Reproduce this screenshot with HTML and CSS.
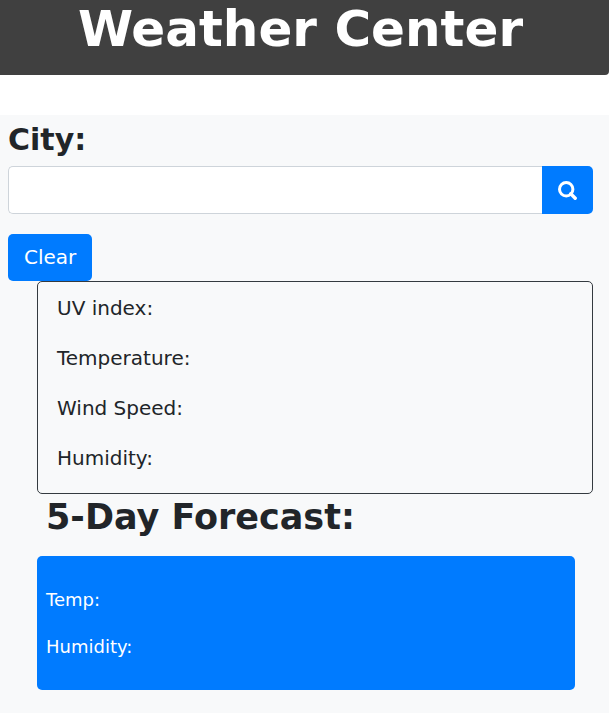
FILE: index.html
```html
<!DOCTYPE html>
<html lang="en">
<head>
  <meta charset="utf-8">
  <meta name="viewport" content="width=device-width, initial-scale=1">
  <title>Weather Center</title>
  <link rel="stylesheet" href="styles.css">
</head>
<body>
  <header class="banner">
    <h1 class="banner-title">Weather Center</h1>
  </header>
  <main class="content">
    <form class="search">
      <label class="search-label" for="city">City:</label>
      <div class="search-group">
        <input class="search-input" id="city" type="text">
        <button class="button search-button" type="submit" aria-label="Search">
          <svg class="search-icon" viewBox="0 0 19 20" aria-hidden="true">
            <circle cx="8.2" cy="9.2" r="6.7" fill="none" stroke="currentColor" stroke-width="3"/>
            <path d="M12.8 13.8L17.2 18.2" fill="none" stroke="currentColor" stroke-width="3.4" stroke-linecap="round"/>
          </svg>
        </button>
      </div>
      <button class="button" type="reset">Clear</button>
    </form>
    <section class="current">
      <p class="reading">UV index:</p>
      <p class="reading">Temperature:</p>
      <p class="reading">Wind Speed:</p>
      <p class="reading">Humidity:</p>
    </section>
    <section class="forecast">
      <h2 class="forecast-title">5-Day Forecast:</h2>
      <div class="day">
        <p class="day-reading">Temp:</p>
        <p class="day-reading">Humidity:</p>
      </div>
    </section>
  </main>
</body>
</html>
```
FILE: styles.css
```css
* {
  box-sizing: border-box;
}

body {
  display: flex;
  flex-direction: column;
  min-height: 100vh;
  margin: 0;
  background: #fff;
  color: #212529;
  font-family: Verdana, "DejaVu Sans", sans-serif;
  font-size: 20px;
  line-height: 30px;
}

h1,
h2,
p {
  margin: 0;
}

.banner {
  margin-bottom: 40px;
  padding: 0 8px 17px 0;
  border-radius: 0 0 4px 0;
  background: #404040;
  color: #fff;
  text-align: center;
}

.banner-title {
  font-size: 50px;
  line-height: 58px;
}

.content {
  flex: 1;
  padding: 6px 16px 23px 8px;
  background: #f8f9fa;
}

.search {
  display: flex;
  flex-direction: column;
  align-items: flex-start;
}

.search-label {
  margin-bottom: 8px;
  font-size: 30px;
  font-weight: bold;
  line-height: 37px;
}

.search-group {
  display: flex;
  align-self: stretch;
  margin-bottom: 20px;
}

.search-input {
  flex: 1;
  min-width: 0;
  height: 48px;
  padding: 8px 16px;
  border: 1px solid #ced4da;
  border-right: 0;
  border-radius: 5px 0 0 5px;
  background: #fff;
  color: #495057;
  font: inherit;
}

.button {
  padding: 8px 16px;
  border: 0;
  border-radius: 5px;
  background: #007bff;
  color: #fff;
  font: inherit;
  line-height: 31px;
  cursor: pointer;
}

.search-button {
  display: flex;
  align-items: center;
  border-radius: 0 5px 5px 0;
}

.search-icon {
  width: 19px;
  height: 20px;
}

.current {
  display: grid;
  gap: 20px;
  margin-left: 29px;
  padding: 11px 19px 20px;
  border: 1px solid #343a40;
  border-radius: 5px;
}

.forecast {
  margin-left: 29px;
}

.forecast-title {
  margin-bottom: 16px;
  padding: 0 9px;
  font-size: 35px;
  line-height: 46px;
}

.day {
  display: grid;
  gap: 20px;
  margin-right: 18px;
  padding: 30px 9px;
  border-radius: 5px;
  background: #007bff;
  color: #fff;
  font-size: 18px;
  line-height: 27px;
}
```
